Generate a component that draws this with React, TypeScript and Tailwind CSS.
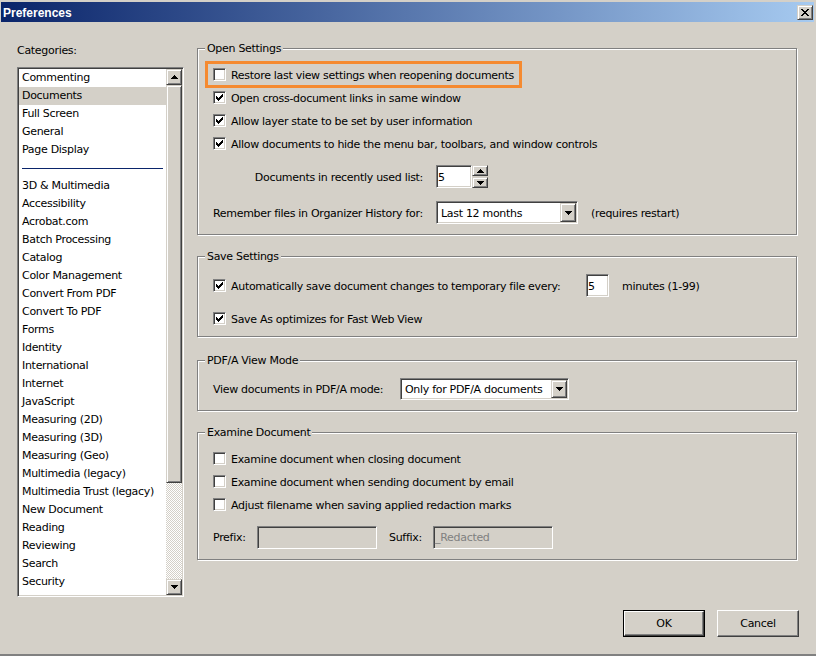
import React from "react";

const sunken =
    "border border-t-[#808080] border-l-[#808080] border-b-white border-r-white shadow-[inset_1px_1px_0_#404040,inset_-1px_-1px_0_#d4d0c8]";
const raised =
    "border border-t-[#d4d0c8] border-l-[#d4d0c8] border-b-[#404040] border-r-[#404040] shadow-[inset_1px_1px_0_#fff,inset_-1px_-1px_0_#808080] bg-[#d4d0c8]";
const pushBtn =
    "border border-t-white border-l-white border-b-[#404040] border-r-[#404040] shadow-[inset_-1px_-1px_0_#808080] bg-[#d4d0c8]";
// label box: 14px tall, glyphs sit a pixel lower like Tahoma
const lbl = "h-[14px] leading-[16px] whitespace-nowrap";

const topCats = ["Commenting", "Documents", "Full Screen", "General", "Page Display"];
const moreCats = [
    "3D & Multimedia",
    "Accessibility",
    "Acrobat.com",
    "Batch Processing",
    "Catalog",
    "Color Management",
    "Convert From PDF",
    "Convert To PDF",
    "Forms",
    "Identity",
    "International",
    "Internet",
    "JavaScript",
    "Measuring (2D)",
    "Measuring (3D)",
    "Measuring (Geo)",
    "Multimedia (legacy)",
    "Multimedia Trust (legacy)",
    "New Document",
    "Reading",
    "Reviewing",
    "Search",
    "Security",
    "Security (Enhanced)",
];

// pixel checkmark, 7 columns, 3px tall each
const checkTops = [2, 3, 4, 3, 2, 1, 0];

function Check({ on }: { on?: boolean }) {
    return (
        <span className={"w-[13px] h-[13px] shrink-0 bg-white block " + sunken}>
            {on && (
                <svg width="11" height="11" shapeRendering="crispEdges" className="block">
                    {checkTops.map((t, i) => (
                        <rect key={i} x={2 + i} y={2 + t} width="1" height="3" fill="#000" />
                    ))}
                </svg>
            )}
        </span>
    );
}

function Arrow({ up }: { up?: boolean }) {
    const rows = up ? [3, 2, 1, 0] : [0, 1, 2, 3];
    return (
        <svg width="7" height="4" shapeRendering="crispEdges" className="block">
            {rows.map((r, i) => (
                <rect key={i} x={r} y={i} width={7 - r * 2} height="1" fill="#000" />
            ))}
        </svg>
    );
}

function CloseGlyph() {
    const rows = ["XX....XX", ".XX..XX.", "..XXXX..", "...XX...", "..XXXX..", ".XX..XX.", "XX....XX"];
    return (
        <svg width="8" height="7" shapeRendering="crispEdges" className="block">
            {rows.map((row, y) =>
                row.split("").map((c, x) =>
                    c === "X" ? <rect key={y + "-" + x} x={x} y={y} width="1" height="1" fill="#000" /> : null
                )
            )}
        </svg>
    );
}

function Combo({ value, className }: { value: string; className: string }) {
    return (
        <div className={"bg-white p-[1px] flex items-stretch " + sunken + " " + className}>
            <span className="flex-1 pl-[3px] flex items-center">
                <span className={lbl}>{value}</span>
            </span>
            <span className={"w-[16px] flex items-center justify-center " + raised}>
                <Arrow />
            </span>
        </div>
    );
}

function Group({ title, className, children }: { title: string; className: string; children: React.ReactNode }) {
    return (
        <fieldset
            className={
                "m-0 min-w-0 border border-[#808080] shadow-[inset_1px_1px_0_#fff,1px_1px_0_#fff] px-[7px] " +
                className
            }
        >
            <legend className="px-[2px] bg-[#d4d0c8] h-[14px] leading-[16px]">{title}</legend>
            <div className="pl-[8px] flex flex-col">{children}</div>
        </fieldset>
    );
}

function CheckRow({ on, label, className = "" }: { on?: boolean; label: string; className?: string }) {
    return (
        <div className={"h-[23px] flex items-center gap-[5px] " + className}>
            <Check on={on} />
            <span className={lbl}>{label}</span>
        </div>
    );
}

export default function App() {
    return (
        <div className="w-[816px] h-[656px] overflow-hidden bg-[#d4d0c8] flex flex-col border-b-2 border-b-[#808080] font-['DejaVu_Sans',sans-serif] text-[11px] leading-[14px] tracking-[-0.3px] text-black">
            {/* title bar */}
            <div className="mt-[2px] ml-[1px] mr-[2px] h-[20px] shrink-0 flex items-center justify-between pl-[2px] pr-[1px] bg-[linear-gradient(to_right,#0a246a,#a6caf0)]">
                <span className="mt-[2px] font-['Liberation_Sans',sans-serif] font-bold text-[12px] tracking-normal text-white">
                    Preferences
                </span>
                <span className={"w-[16px] h-[15px] flex items-center justify-center " + raised}>
                    <CloseGlyph />
                </span>
            </div>

            <div className="flex-1 flex flex-col">
                <div className="flex pl-[17px] pt-[19px]">
                    {/* categories */}
                    <div className="w-[167px] shrink-0 flex flex-col">
                        <div className={"mt-[2px] " + lbl}>Categories:</div>
                        <div className={"mt-[10px] h-[530px] bg-white p-[1px] flex " + sunken}>
                            <div className="flex-1 overflow-hidden">
                                {topCats.map((c) => (
                                    <div
                                        key={c}
                                        className={
                                            "h-[18px] pl-[3px] flex items-center whitespace-nowrap " +
                                            (c === "Documents" ? "bg-[#d4d0c8]" : "")
                                        }
                                    >
                                        {c}
                                    </div>
                                ))}
                                <div className="h-[18px] pl-[3px] flex items-center">
                                    <div className="w-[141px] h-px bg-[#0a246a]" />
                                </div>
                                {moreCats.map((c) => (
                                    <div key={c} className="h-[18px] pl-[3px] flex items-center whitespace-nowrap">
                                        {c}
                                    </div>
                                ))}
                            </div>
                            <div className="w-[16px] flex flex-col">
                                <div className={"h-[16px] flex items-center justify-center " + raised}>
                                    <Arrow up />
                                </div>
                                <div className={"h-[398px] " + raised} />
                                <div className="flex-1 bg-[repeating-conic-gradient(#d4d0c8_0%_25%,#ffffff_0%_50%)] bg-size-[2px_2px]" />
                                <div className={"h-[16px] flex items-center justify-center " + raised}>
                                    <Arrow />
                                </div>
                            </div>
                        </div>
                    </div>

                    {/* settings */}
                    <div className="ml-[13px] w-[600px] flex flex-col">
                        <Group title="Open Settings" className="pt-[8px] pb-[10px]">
                            <div className="self-start -ml-[6px] px-[6px] outline-3 outline-[#f58a30] -outline-offset-1">
                                <CheckRow label="Restore last view settings when reopening documents" />
                            </div>
                            <CheckRow on label="Open cross-document links in same window" />
                            <CheckRow on label="Allow layer state to be set by user information" />
                            <CheckRow on label="Allow documents to hide the menu bar, toolbars, and window controls" />
                            <div className="mt-[10px] h-[23px] flex items-center">
                                <span className={"w-[210px] text-right " + lbl}>Documents in recently used list:</span>
                                <div className="ml-[13px] flex">
                                    <div className={"w-[36px] h-[23px] bg-white pl-[1px] flex items-center " + sunken}>
                                        <span className={lbl}>5</span>
                                    </div>
                                    <div className="w-[16px] h-[23px] flex flex-col gap-[1px]">
                                        <div className={"h-[11px] flex items-center justify-center " + raised}>
                                            <Arrow up />
                                        </div>
                                        <div className={"h-[11px] flex items-center justify-center " + raised}>
                                            <Arrow />
                                        </div>
                                    </div>
                                </div>
                            </div>
                            <div className="mt-[13px] h-[23px] flex items-center">
                                <span className={"w-[210px] " + lbl}>Remember files in Organizer History for:</span>
                                <Combo value="Last 12 months" className="ml-[13px] w-[142px] h-[23px]" />
                                <span className={"ml-[13px] " + lbl}>(requires restart)</span>
                            </div>
                        </Group>

                        <Group title="Save Settings" className="mt-[14px] pt-[11px] pb-[6px]">
                            <div className="h-[23px] flex items-center">
                                <span className="w-[373px] flex items-center gap-[5px]">
                                    <Check on />
                                    <span className={lbl}>Automatically save document changes to temporary file every:</span>
                                </span>
                                <div className={"w-[23px] h-[23px] bg-white pl-[1px] flex items-center " + sunken}>
                                    <span className={lbl}>5</span>
                                </div>
                                <span className={"ml-[13px] " + lbl}>minutes (1-99)</span>
                            </div>
                            <CheckRow on label="Save As optimizes for Fast Web View" className="mt-[10px]" />
                        </Group>

                        <Group title="PDF/A View Mode" className="mt-[16px] pt-[11px] pb-[10px]">
                            <div className="h-[22px] flex items-center">
                                <span className={"w-[187px] " + lbl}>View documents in PDF/A mode:</span>
                                <Combo value="Only for PDF/A documents" className="w-[169px] h-[22px]" />
                            </div>
                        </Group>

                        <Group title="Examine Document" className="mt-[14px] pt-[8px] pb-[10px]">
                            <CheckRow label="Examine document when closing document" />
                            <CheckRow label="Examine document when sending document by email" />
                            <CheckRow label="Adjust filename when saving applied redaction marks" />
                            <div className="mt-[10px] h-[23px] flex items-center">
                                <span className="w-[44px]">Prefix:</span>
                                <div className={"w-[120px] h-[23px] " + sunken} />
                                <span className="ml-[12px] w-[44px]">Suffix:</span>
                                <div className={"w-[120px] h-[23px] pl-[1px] flex items-center text-[#808080] " + sunken}>
                                    _Redacted
                                </div>
                            </div>
                        </Group>
                    </div>
                </div>

                <div className="mt-[13px] pr-[17px] flex justify-end gap-[12px]">
                    <button className="w-[82px] h-[27px] border border-black p-0">
                        <span className={"w-full h-full flex items-center justify-center " + pushBtn}>OK</span>
                    </button>
                    <button className={"w-[82px] h-[27px] flex items-center justify-center " + pushBtn}>Cancel</button>
                </div>
            </div>
        </div>
    );
}
